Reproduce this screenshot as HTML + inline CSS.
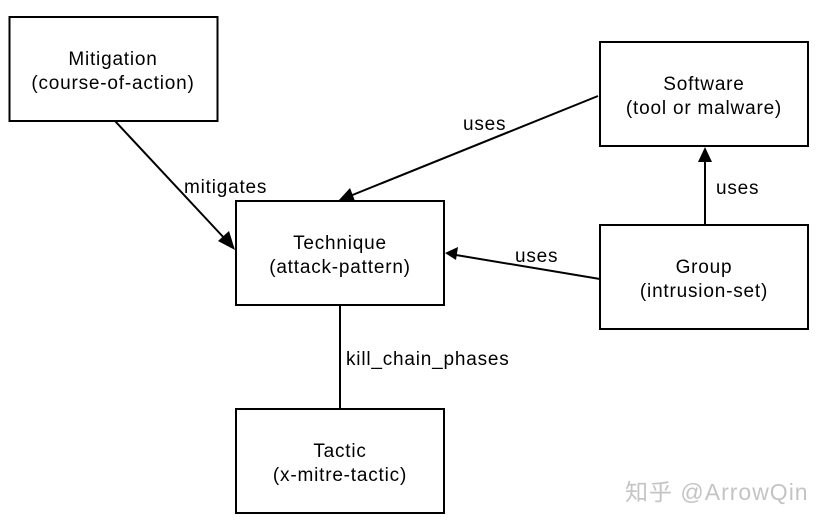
<!DOCTYPE html>
<html><head><meta charset="utf-8"><style>
html,body{margin:0;padding:0;background:#fff;}
svg{display:block;}
text{font-family:"Liberation Sans",Arial,sans-serif;font-size:19px;letter-spacing:0.8px;fill:#000;}
</style></head><body>
<svg width="837" height="527" viewBox="0 0 837 527" xmlns="http://www.w3.org/2000/svg">
<g fill="#fff" stroke="#000" stroke-width="2">
<rect x="9.5" y="17" width="208" height="104"/>
<rect x="600" y="42" width="208" height="104"/>
<rect x="236" y="201" width="208" height="104"/>
<rect x="600" y="225" width="208" height="104"/>
<rect x="236" y="409" width="208" height="104"/>
</g>
<g stroke="#000" stroke-width="2" fill="none">
<line x1="115" y1="121" x2="226" y2="240"/>
<line x1="598" y1="96" x2="350" y2="196"/>
<line x1="600" y1="279" x2="456" y2="255"/>
<line x1="705" y1="225" x2="705" y2="160"/>
<line x1="340" y1="305" x2="340" y2="409"/>
</g>
<g fill="#000">
<polygon points="235,250 218,241 229,231"/>
<polygon points="339,200 350,188 355,201"/>
<polygon points="445,253 458,247 456,260"/>
<polygon points="705,147 712,162 698,162"/>
</g>
<g text-anchor="middle">
<text x="113" y="65">Mitigation</text>
<text x="113" y="89">(course-of-action)</text>
<text x="704" y="90">Software</text>
<text x="704" y="114">(tool or malware)</text>
<text x="340" y="249">Technique</text>
<text x="340" y="273">(attack-pattern)</text>
<text x="704" y="273">Group</text>
<text x="704" y="297">(intrusion-set)</text>
<text x="340" y="457">Tactic</text>
<text x="340" y="481">(x-mitre-tactic)</text>
</g>
<text x="184" y="193">mitigates</text>
<text x="463" y="130">uses</text>
<text x="515" y="262">uses</text>
<text x="716" y="194">uses</text>
<text x="346" y="365">kill_chain_phases</text>
<text x="625" y="500" style="font-family:'Liberation Sans','Noto Sans CJK SC',sans-serif;font-size:23px;letter-spacing:1px;fill:#c4c4c4;">知乎 @ArrowQin</text>
</svg>
</body></html>
